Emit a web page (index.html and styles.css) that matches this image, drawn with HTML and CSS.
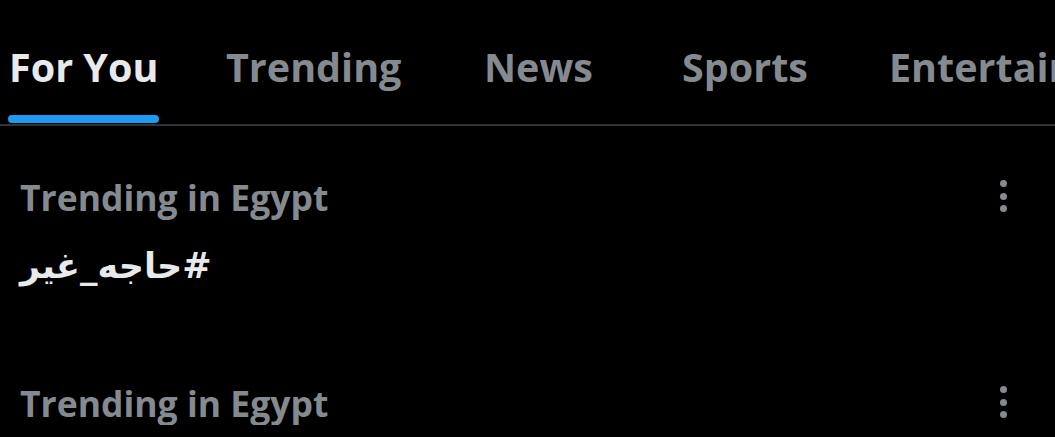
FILE: index.html
```html
<!DOCTYPE html>
<html lang="en">
<head>
    <meta charset="UTF-8">
    <meta name="viewport" content="width=device-width, initial-scale=1.0">
    <title>Explore</title>
    <link rel="stylesheet" href="styles.css">
</head>
<body>
    <nav class="tabs">
        <div class="tab active"><span class="tab-label">For You</span></div>
        <div class="tab"><span class="tab-label">Trending</span></div>
        <div class="tab"><span class="tab-label">News</span></div>
        <div class="tab"><span class="tab-label">Sports</span></div>
        <div class="tab"><span class="tab-label">Entertainment</span></div>
    </nav>

    <div class="trend">
        <div class="trend-text">
            <div class="trend-label">Trending in Egypt</div>
            <div class="trend-name"><span dir="rtl">#حاجه_غير</span></div>
        </div>
        <div class="more"><span></span><span></span><span></span></div>
    </div>

    <div class="trend">
        <div class="trend-text">
            <div class="trend-label">Trending in Egypt</div>
        </div>
        <div class="more"><span></span><span></span><span></span></div>
    </div>
</body>
</html>
```

FILE: styles.css
```css
body {
    margin: 0;
    background: #000;
    font-family: "Open Sans", "DejaVu Sans", sans-serif;
    overflow: hidden;
}
.tabs {
    display: flex;
    white-space: nowrap;
    border-bottom: 2px solid #2f3336;
    height: 126px;
    box-sizing: border-box;
    padding-left: 9px;
}
.tab {
    flex: none;
    padding-top: 42px;
    font-size: 39.5px;
    font-weight: 700;
    color: #858a90;
    line-height: 50px;
}
.tab:nth-child(1) { width: 217px; }
.tab:nth-child(2) { width: 258px; }
.tab:nth-child(3) { width: 198px; }
.tab:nth-child(4) { width: 207px; }
.tab-label {
    position: relative;
    display: inline-block;
}
.tab.active {
    color: #e7e9ea;
}
.tab.active .tab-label::after {
    content: "";
    position: absolute;
    left: -1px;
    right: -1px;
    top: 73px;
    height: 8px;
    border-radius: 4px;
    background: #1d9bf0;
}
.trend {
    display: flex;
    justify-content: space-between;
    padding: 49px 48px 0 20px;
    height: 206px;
    box-sizing: border-box;
}
.trend:last-child {
    height: auto;
}
.trend-label {
    font-size: 35.5px;
    font-weight: 700;
    color: #858a90;
    line-height: 44px;
}
.trend-name {
    margin-top: 25px;
    font-size: 35px;
    font-weight: 700;
    line-height: 44px;
    color: #e7e9ea;
    font-family: "DejaVu Sans", sans-serif;
}
.more {
    display: flex;
    flex-direction: column;
    gap: 5.5px;
    padding-top: 5px;
}
.more span {
    width: 7px;
    height: 7px;
    border-radius: 50%;
    background: #858a90;
}
```
